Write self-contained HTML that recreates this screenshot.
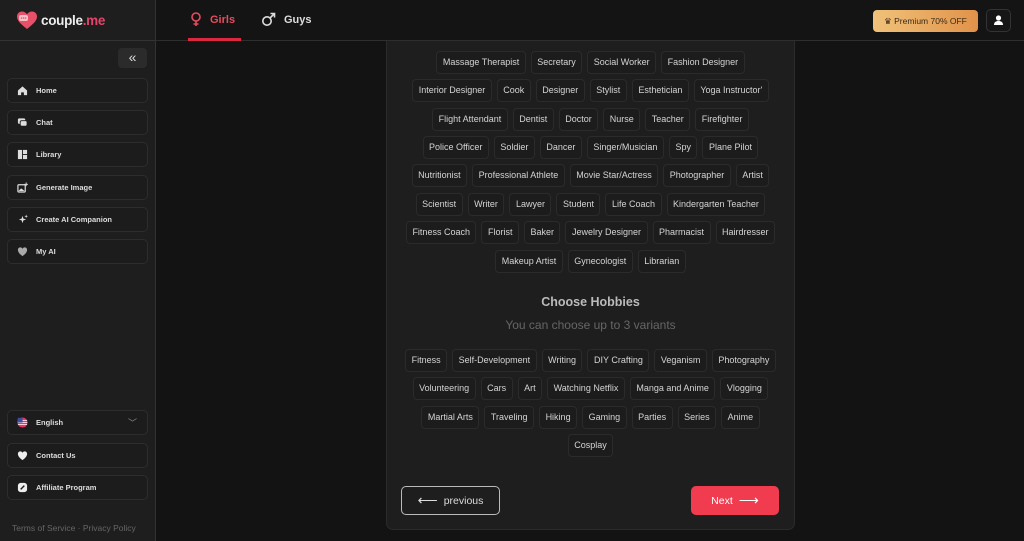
<!DOCTYPE html>
<html><head><meta charset="utf-8"><style>
*{box-sizing:border-box;margin:0;padding:0}
body{width:1024px;height:541px;overflow:hidden;background:#131313;font-family:"Liberation Sans",sans-serif;color:#ddd;position:relative}
.side{position:absolute;left:0;top:0;width:156px;height:541px;background:#1e1e1e;border-right:1px solid #333}
.top{position:absolute;left:156px;top:0;right:0;height:41px;background:#141414;border-bottom:1px solid #2e2e2e}
.sh{height:41px;border-bottom:1px solid #333;position:relative}
.logo{position:absolute;left:16px;top:10px;display:flex;align-items:center;gap:3px;font-size:13.5px;font-weight:bold;color:#eee;letter-spacing:-0.3px}
.logo b{color:#e3466a;font-weight:bold}
.collapse{position:absolute;left:118px;top:48px;width:29px;height:20px;background:#2b2b2b;border-radius:4px;color:#ddd;font-size:14px;text-align:center;line-height:19px}
.nav{position:absolute;left:7px;width:141px;height:25px;border:1px solid #2d2d2d;border-radius:5px;background:#1c1c1c;font-size:7.5px;font-weight:bold;color:#ddd;display:flex;align-items:center;padding-left:9px;gap:8px}
.ic{width:11px;height:11px;display:inline-block}
.terms{position:absolute;left:12px;top:523px;font-size:8.5px;color:#666}
.tab{position:absolute;top:12px;font-size:11px;font-weight:bold;display:flex;align-items:center;gap:8px}
.prem{position:absolute;left:873px;top:10px;width:105px;height:22px;border-radius:4px;background:linear-gradient(90deg,#f0c27a,#e1924a);color:#3b2a14;font-size:8.5px;text-align:center;line-height:22px}
.user{position:absolute;left:986px;top:9px;width:25px;height:23px;border:1px solid #333;border-radius:5px;background:#161616}
.card{position:absolute;left:386px;top:41px;width:409px;height:489px;background:#1e1e1e;border:1px solid #2b2b2b;border-top:none;border-radius:0 0 7px 7px}
.row{position:absolute;left:0;width:100%;display:flex;justify-content:center;gap:5px}
.c{height:23px;line-height:21px;padding:0 5.5px;border:1px solid #2b2b2b;border-radius:4px;background:#1c1c1c;font-size:9px;color:#d4d4d4;white-space:nowrap}
.h{position:absolute;width:100%;text-align:center}
.btn{position:absolute;top:445px;height:29px;border-radius:5px;font-size:10.5px;display:flex;align-items:center;justify-content:center;gap:6px}
</style></head><body>
<div class="side">
 <div class="sh"><div class="logo"><svg width="22" height="20" viewBox="0 0 22 20"><path d="M11 19C5 14 1 11 1 6.5 1 3.5 3.3 1.5 6 1.5c2 0 3.6 1 5 2.7C12.4 2.5 14 1.5 16 1.5c2.7 0 5 2 5 5C21 11 17 14 11 19z" fill="#e8506a"/><rect x="3" y="5" width="9" height="6" rx="2" fill="#f6c0c8"/><circle cx="5.5" cy="8" r=".8" fill="#e8506a"/><circle cx="7.5" cy="8" r=".8" fill="#e8506a"/><circle cx="9.5" cy="8" r=".8" fill="#e8506a"/></svg><span>couple<b>.me</b></span></div></div>
 <div class="collapse">«</div>
 <div class="nav" style="top:78px"><svg class="ic" viewBox="0 0 12 12"><path d="M1 6L6 1.5 11 6V11H7.5V8h-3v3H1z" fill="#ddd"/></svg>Home</div>
 <div class="nav" style="top:110px"><svg class="ic" viewBox="0 0 12 12"><rect x="1" y="1.5" width="8" height="6" rx="1.5" fill="#ddd"/><rect x="3.5" y="4" width="7.5" height="6" rx="1.5" fill="#ddd" stroke="#1c1c1c"/></svg>Chat</div>
 <div class="nav" style="top:142px"><svg class="ic" viewBox="0 0 12 12"><rect x="1" y="1" width="4.5" height="10" fill="#ddd"/><rect x="6.5" y="1" width="4.5" height="4.5" fill="#ddd"/><rect x="6.5" y="6.5" width="4.5" height="4.5" fill="#ddd"/></svg>Library</div>
 <div class="nav" style="top:175px"><svg class="ic" viewBox="0 0 12 12"><rect x="1" y="3" width="8" height="8" rx="1" fill="none" stroke="#ddd" stroke-width="1.3"/><path d="M1.5 10l3-3 4 3" fill="#ddd"/><path d="M10 0.5v4M8 2.5h4" stroke="#ddd"/></svg>Generate Image</div>
 <div class="nav" style="top:207px"><svg class="ic" viewBox="0 0 12 12"><path d="M6 2l1 3 3 1-3 1-1 3-1-3-3-1 3-1z" fill="#ddd"/><path d="M10 0.5l.5 1.5 1.5.5-1.5.5-.5 1.5-.5-1.5L8 2.5l1.5-.5z" fill="#ddd"/></svg>Create AI Companion</div>
 <div class="nav" style="top:239px"><svg class="ic" viewBox="0 0 12 12"><path d="M6 11C2.5 8.5 1 6.5 1 4.2 1 2.5 2.3 1.5 3.7 1.5 4.8 1.5 5.5 2.2 6 3c.5-.8 1.2-1.5 2.3-1.5C9.7 1.5 11 2.5 11 4.2 11 6.5 9.5 8.5 6 11z" fill="#aaa"/></svg>My AI</div>
 <div class="nav" style="top:410px"><svg class="ic" viewBox="0 0 12 12"><circle cx="6" cy="6" r="5.5" fill="#e36"/><path d="M1 4h10M0.8 6h10.5M1 8h10" stroke="#fff" stroke-width=".8"/><path d="M1 1h5v5H0z" fill="#3b4ea0"/></svg>English<span style="margin-left:auto;margin-right:10px;color:#888;font-size:9px;font-weight:normal">﹀</span></div>
 <div class="nav" style="top:443px"><svg class="ic" viewBox="0 0 12 12"><path d="M6 11C2.5 8.5 1 6.5 1 4.2 1 2.5 2.3 1.5 3.7 1.5 4.8 1.5 5.5 2.2 6 3c.5-.8 1.2-1.5 2.3-1.5C9.7 1.5 11 2.5 11 4.2 11 6.5 9.5 8.5 6 11z" fill="#eee"/></svg>Contact Us</div>
 <div class="nav" style="top:475px"><svg class="ic" viewBox="0 0 12 12"><rect x="1" y="1" width="10" height="10" rx="3" fill="#eee"/><path d="M4 8l4-4" stroke="#1c1c1c" stroke-width="1.5"/></svg>Affiliate Program</div>
 <div class="terms">Terms of Service · Privacy Policy</div>
</div>
<div class="top">
 <div class="tab" style="left:34px;color:#e84a5f"><svg width="12" height="15" viewBox="0 0 12 15"><circle cx="6" cy="5" r="4" fill="none" stroke="#e84a5f" stroke-width="1.6"/><path d="M6 9v5M3.5 12h5" stroke="#e84a5f" stroke-width="1.6"/></svg>Girls</div>
 <div style="position:absolute;left:32px;top:38px;width:53px;height:3px;background:#d9283f"></div>
 <div class="tab" style="left:105px;color:#ddd"><svg width="15" height="15" viewBox="0 0 15 15"><circle cx="6" cy="9" r="4.2" fill="none" stroke="#ddd" stroke-width="1.6"/><path d="M9 6l4.5-4.5M9.5 1.5h4v4" fill="none" stroke="#ddd" stroke-width="1.6"/></svg>Guys</div>
</div>
<div class="prem">♛ Premium 70% OFF</div>
<div class="user"><svg width="23" height="21" viewBox="0 0 23 21"><circle cx="11.5" cy="8" r="2.6" fill="#fff"/><path d="M7 15c0-3 2-4 4.5-4s4.5 1 4.5 4z" fill="#fff"/></svg></div>
<div class="card">
 <div class="row" style="top:10px"><span class="c">Massage Therapist</span><span class="c">Secretary</span><span class="c">Social Worker</span><span class="c">Fashion Designer</span></div>
 <div class="row" style="top:38px"><span class="c">Interior Designer</span><span class="c">Cook</span><span class="c">Designer</span><span class="c">Stylist</span><span class="c">Esthetician</span><span class="c">Yoga Instructor'</span></div>
 <div class="row" style="top:67px"><span class="c">Flight Attendant</span><span class="c">Dentist</span><span class="c">Doctor</span><span class="c">Nurse</span><span class="c">Teacher</span><span class="c">Firefighter</span></div>
 <div class="row" style="top:95px"><span class="c">Police Officer</span><span class="c">Soldier</span><span class="c">Dancer</span><span class="c">Singer/Musician</span><span class="c">Spy</span><span class="c">Plane Pilot</span></div>
 <div class="row" style="top:123px"><span class="c">Nutritionist</span><span class="c">Professional Athlete</span><span class="c">Movie Star/Actress</span><span class="c">Photographer</span><span class="c">Artist</span></div>
 <div class="row" style="top:152px"><span class="c">Scientist</span><span class="c">Writer</span><span class="c">Lawyer</span><span class="c">Student</span><span class="c">Life Coach</span><span class="c">Kindergarten Teacher</span></div>
 <div class="row" style="top:180px"><span class="c">Fitness Coach</span><span class="c">Florist</span><span class="c">Baker</span><span class="c">Jewelry Designer</span><span class="c">Pharmacist</span><span class="c">Hairdresser</span></div>
 <div class="row" style="top:209px"><span class="c">Makeup Artist</span><span class="c">Gynecologist</span><span class="c">Librarian</span></div>
 <div class="h" style="top:254px;font-size:12.5px;font-weight:bold;color:#bbb">Choose Hobbies</div>
 <div class="h" style="top:277px;font-size:12px;color:#666">You can choose up to 3 variants</div>
 <div class="row" style="top:308px"><span class="c">Fitness</span><span class="c">Self-Development</span><span class="c">Writing</span><span class="c">DIY Crafting</span><span class="c">Veganism</span><span class="c">Photography</span></div>
 <div class="row" style="top:336px"><span class="c">Volunteering</span><span class="c">Cars</span><span class="c">Art</span><span class="c">Watching Netflix</span><span class="c">Manga and Anime</span><span class="c">Vlogging</span></div>
 <div class="row" style="top:365px"><span class="c">Martial Arts</span><span class="c">Traveling</span><span class="c">Hiking</span><span class="c">Gaming</span><span class="c">Parties</span><span class="c">Series</span><span class="c">Anime</span></div>
 <div class="row" style="top:393px"><span class="c">Cosplay</span></div>
 <div class="btn" style="left:14px;width:99px;border:1px solid #bbb;color:#ddd"><span style="font-size:14px">⟵</span>previous</div>
 <div class="btn" style="left:304px;width:88px;background:#f13c50;color:#fff">Next<span style="font-size:14px">⟶</span></div>
</div>
</body></html>
